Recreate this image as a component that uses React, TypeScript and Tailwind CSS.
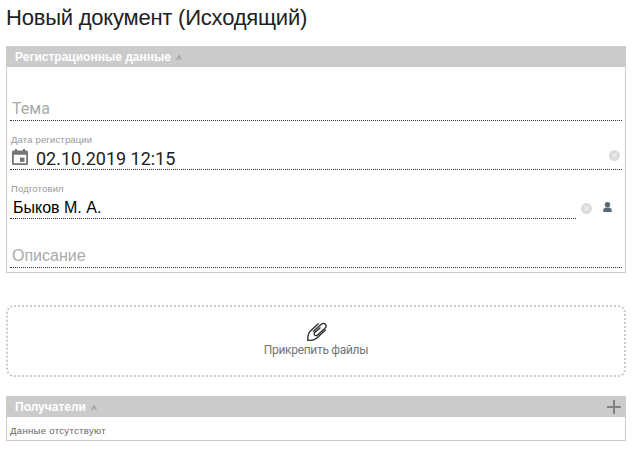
import React from "react";

const ARIAL = "font-['Liberation_Sans',Arial,sans-serif]";
const ROBOTO = "font-['Roboto',sans-serif]";

function ClearIcon() {
  return (
    <svg width="11" height="11" viewBox="0 0 11 11" className="block shrink-0">
      <circle cx="5.5" cy="5.5" r="5.5" fill="#dcdcdc" />
      <path d="M3.4 3.4l4.2 4.2M7.6 3.4L3.4 7.6" stroke="#fff" strokeWidth="1" />
    </svg>
  );
}

function PersonIcon() {
  return (
    <svg width="9" height="10" viewBox="0 0 9 10" className="block shrink-0" fill="#5b6773">
      <path d="M4.5 0C6.200 0 7.200 1.1 7.200 2.6 7.200 4.4 6 5.800 4.5 5.800S1.800 4.4 1.800 2.6C1.800 1.1 2.800 0 4.5 0z" />
      <path d="M.3 10V8C.3 6.700 1.2 6 2.7 5.5c1 .7 2.6.7 3.6 0C7.8 6 8.700 6.700 8.700 8v2z" />
    </svg>
  );
}

function CalendarIcon() {
  return (
    <svg width="16" height="17" viewBox="0 0 16 17" className="block shrink-0" fill="#757575">
      <path
        fillRule="evenodd"
        d="M3 0h2v1.500h6V0h2v1.500h1.300C15.300 1.500 16 2.200 16 3.100V14.400c0 .9-.7 1.600-1.700 1.600H1.700C.7 16 0 15.300 0 14.400V3.100C0 2.200.7 1.500 1.700 1.500H3zM1.800 5.700v8.600h12.400V5.700z"
      />
      <path d="M8 8.500h4.500v4.300H8z" />
    </svg>
  );
}

function Caret() {
  return (
    <svg width="6" height="5" viewBox="0 0 6 5" className="ml-[5px] mt-[2px] block shrink-0">
      <path d="M.8 5L3 .8 5.200 5" fill="none" stroke="#a3a3a3" strokeWidth="1.500" />
    </svg>
  );
}

function PanelHeader({ title, children }: { title: string; children?: React.ReactNode }) {
  return (
    <div className={`flex h-[21px] items-center bg-[#cbcbcb] pl-[8px] ${ARIAL}`}>
      <span className="pt-px text-[12px] leading-[21px] font-bold whitespace-nowrap text-white">{title}</span>
      <Caret />
      {children}
    </div>
  );
}

function Field({ label, className = "", children }: { label?: string; className?: string; children: React.ReactNode }) {
  return (
    <div className={`h-[49px] border-b border-dotted border-[#333] ${className}`}>
      <div className={`h-[25px] pt-[13px] pl-px text-[9.5px] leading-[12px] tracking-[0.16px] text-[#999] ${ARIAL}`}>{label}</div>
      <div className="flex h-[23px] items-center">{children}</div>
    </div>
  );
}

export default function App() {
  return (
    <div className="h-[449px] w-[633px] overflow-hidden bg-white pl-[6px]">
      <h1 className={`h-[46px] pt-[4px] text-[22px] leading-[27px] tracking-[-0.22px] whitespace-nowrap text-[#212121] ${ARIAL}`}>
        Новый документ (Исходящий)
      </h1>

      <section className="h-[227px] w-[620px] border border-t-0 border-[#cbcbcb]">
        <PanelHeader title="Регистрационные данные" />
        <div className="px-[3px] pt-[5px]">
          <Field>
            <span className={`pl-[2px] text-[16px] text-[#aaa] ${ROBOTO}`}>Тема</span>
          </Field>
          <Field label="Дата регистрации">
            <div className="flex w-full items-center pr-[2px] pl-[2px]">
              <CalendarIcon />
              <span className={`ml-[8px] pt-[2px] text-[18px] leading-[23px] tracking-[-0.03px] text-[#212121] ${ROBOTO}`}>02.10.2019 12:15</span>
              <span className="mb-[4px] ml-auto"><ClearIcon /></span>
            </div>
          </Field>
          <div className="flex">
            <Field label="Подготовил" className="w-[566px]">
              <span className={`pt-[2px] pl-[3px] text-[16px] text-black ${ARIAL}`}>Быков М. А.</span>
            </Field>
            <div className="flex pt-[33px] pl-[5px]">
              <ClearIcon />
              <span className="ml-[11px] -mt-px"><PersonIcon /></span>
            </div>
          </div>
          <Field>
            <span className={`pl-[2px] text-[16px] text-[#aaa] ${ARIAL}`}>Описание</span>
          </Field>
        </div>
      </section>

      <section className="mt-[32px] flex h-[72px] w-[620px] flex-col items-center rounded-[8px] border-2 border-dotted border-[#cbcbcb] pt-[15px]">
        <svg width="20" height="20" viewBox="0 0 20 20" fill="none" stroke="#2b2b2b" strokeWidth="1.300" className="ml-px block">
          <path d="M13.500 5.500L8 10.300C6 12.300 8.300 15 10.500 13L17.800 6.500C21 3.500 17.500 -.5 14 2.500L6 9.800M11.500 1.500L3 9.500C.6 11.800 .8 14 .8 18.300C5 18.300 7 18.700 9.300 16.500L18.800 7.700" />
        </svg>
        <span className={`pt-px text-[12px] leading-[14px] tracking-[-0.31px] text-[#757575] ${ROBOTO}`}>Прикрепить файлы</span>
      </section>

      <section className="mt-[19px] h-[45px] w-[620px] border border-t-0 border-[#cbcbcb]">
        <PanelHeader title="Получатели">
          <svg width="15" height="15" viewBox="0 0 15 15" className="mt-px mr-[3px] ml-auto block">
            <path d="M7 0v14M0 7h14" stroke="#828282" strokeWidth="2" />
          </svg>
        </PanelHeader>
        <div className={`pt-[7px] pl-[3px] text-[9.5px] leading-[14px] tracking-[0.33px] text-[#666] ${ARIAL}`}>Данные отсутствуют</div>
      </section>
    </div>
  );
}
